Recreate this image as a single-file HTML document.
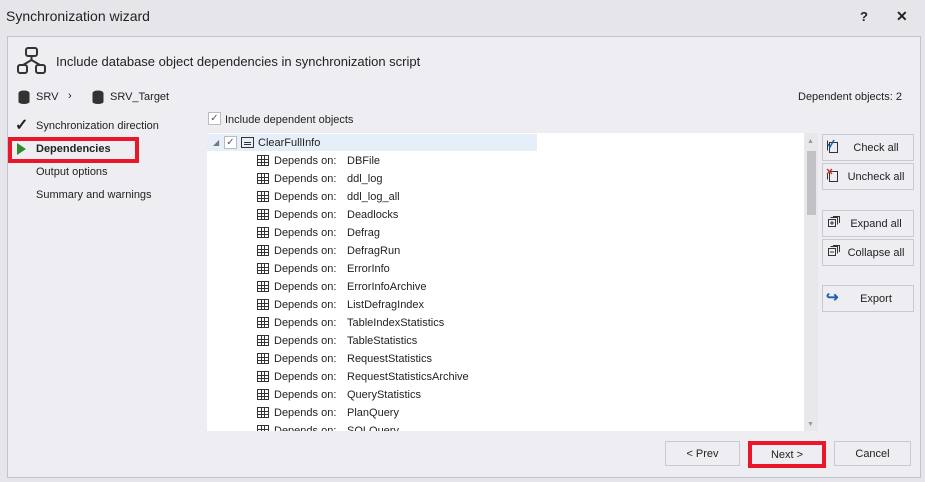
<!DOCTYPE html><html><head><style>
*{margin:0;padding:0;box-sizing:border-box}
body{width:925px;height:482px;background:#e6e6ea;font-family:"Liberation Sans",sans-serif;font-size:11px;color:#222;position:relative;overflow:hidden}
.a{position:absolute}
.panel{left:7px;top:36px;width:914px;height:442px;background:#eeeef2;border:1px solid #bfc3d4}
.btn{position:absolute;background:#eeeef2;border:1px solid #c9c9d0;font-size:11px;text-align:center}
.row{position:absolute;left:50px;height:18px;line-height:18px;white-space:nowrap}
.ti{display:inline-block;width:12px;height:11px;border:1px solid #333;vertical-align:-2px;margin-right:5px;background:linear-gradient(#333,#333) 0 3px/100% 1px no-repeat,linear-gradient(#333,#333) 0 6px/100% 1px no-repeat,linear-gradient(90deg,#333,#333) 3px 0/1px 100% no-repeat,linear-gradient(90deg,#333,#333) 6px 0/1px 100% no-repeat;background-color:#fff}
</style></head><body>
<div class="a" style="left:6px;top:8px;font-size:14px;color:#222">Synchronization wizard</div>
<div class="a" style="left:860px;top:9px;font-size:13px;font-weight:bold">?</div>
<div class="a" style="left:896px;top:8px;font-size:14px;font-weight:bold">✕</div>
<div class="a panel"></div>
<svg class="a" style="left:17px;top:47px" width="30" height="28" viewBox="0 0 30 28" fill="none" stroke="#333" stroke-width="2"><rect x="9" y="1" width="11" height="8" rx="2"/><rect x="1" y="18" width="9" height="8" rx="2"/><rect x="19" y="18" width="9" height="8" rx="2"/><path d="M14.5 9v4M14.5 13L6 18M14.5 13L23 18"/></svg>
<div class="a" style="left:56px;top:54px;font-size:13px">Include database object dependencies in synchronization script</div>
<svg class="a" style="left:18px;top:90px" width="12" height="14"><ellipse cx="6" cy="3" rx="5.5" ry="2.5" fill="#333"/><rect x=".5" y="3" width="11" height="9" fill="#333"/><ellipse cx="6" cy="12" rx="5.5" ry="2" fill="#333"/></svg>
<div class="a" style="left:36px;top:91px">SRV</div>
<div class="a" style="left:68px;top:90px">›</div>
<svg class="a" style="left:92px;top:90px" width="12" height="14"><ellipse cx="6" cy="3" rx="5.5" ry="2.5" fill="#333"/><rect x=".5" y="3" width="11" height="9" fill="#333"/><ellipse cx="6" cy="12" rx="5.5" ry="2" fill="#333"/></svg>
<div class="a" style="left:110px;top:91px">SRV_Target</div>
<div class="a" style="left:798px;top:91px">Dependent objects: 2</div>
<div class="a" style="left:15px;top:115px;font-size:16px;font-weight:bold">✓</div>
<div class="a" style="left:36px;top:120px">Synchronization direction</div>
<div class="a" style="left:8px;top:137px;width:131px;height:26px;border:4px solid #e8182a"></div>
<svg class="a" style="left:17px;top:143px" width="9" height="12"><path d="M0 0L9 6L0 12Z" fill="#2e8b2e"/></svg>
<div class="a" style="left:36px;top:143px;font-weight:bold">Dependencies</div>
<div class="a" style="left:36px;top:166px">Output options</div>
<div class="a" style="left:36px;top:189px">Summary and warnings</div>
<div class="a" style="left:208px;top:112px;width:13px;height:13px;border:1px solid #bbb;background:#fff;font-size:10px;line-height:11px;text-align:center;color:#555">✓</div>
<div class="a" style="left:225px;top:114px">Include dependent objects</div>
<div class="a" style="left:207px;top:133px;width:597px;height:298px;background:#fff;overflow:hidden">
 <div class="a" style="left:0;top:1px;width:330px;height:17px;background:#e5eef9"></div>
 <div class="a" style="left:6px;top:5px;font-size:8px;color:#777">◢</div>
 <div class="a" style="left:17px;top:3px;width:13px;height:13px;border:1px solid #bbb;background:#fff;font-size:10px;line-height:11px;text-align:center;color:#555">✓</div>
 <div class="a" style="left:34px;top:4px;width:13px;height:11px;border:1px solid #333;background:linear-gradient(#333,#333) 2px 4px/7px 1px no-repeat,linear-gradient(#333,#333) 2px 6px/7px 1px no-repeat"></div>
 <div class="row" style="left:51px;top:1px">ClearFullInfo</div>
 <div class="row" style="top:19px"><span class="ti"></span>Depends on:<span class="a" style="left:90px">DBFile</span></div>
 <div class="row" style="top:37px"><span class="ti"></span>Depends on:<span class="a" style="left:90px">ddl_log</span></div>
 <div class="row" style="top:55px"><span class="ti"></span>Depends on:<span class="a" style="left:90px">ddl_log_all</span></div>
 <div class="row" style="top:73px"><span class="ti"></span>Depends on:<span class="a" style="left:90px">Deadlocks</span></div>
 <div class="row" style="top:91px"><span class="ti"></span>Depends on:<span class="a" style="left:90px">Defrag</span></div>
 <div class="row" style="top:109px"><span class="ti"></span>Depends on:<span class="a" style="left:90px">DefragRun</span></div>
 <div class="row" style="top:127px"><span class="ti"></span>Depends on:<span class="a" style="left:90px">ErrorInfo</span></div>
 <div class="row" style="top:145px"><span class="ti"></span>Depends on:<span class="a" style="left:90px">ErrorInfoArchive</span></div>
 <div class="row" style="top:163px"><span class="ti"></span>Depends on:<span class="a" style="left:90px">ListDefragIndex</span></div>
 <div class="row" style="top:181px"><span class="ti"></span>Depends on:<span class="a" style="left:90px">TableIndexStatistics</span></div>
 <div class="row" style="top:199px"><span class="ti"></span>Depends on:<span class="a" style="left:90px">TableStatistics</span></div>
 <div class="row" style="top:217px"><span class="ti"></span>Depends on:<span class="a" style="left:90px">RequestStatistics</span></div>
 <div class="row" style="top:235px"><span class="ti"></span>Depends on:<span class="a" style="left:90px">RequestStatisticsArchive</span></div>
 <div class="row" style="top:253px"><span class="ti"></span>Depends on:<span class="a" style="left:90px">QueryStatistics</span></div>
 <div class="row" style="top:271px"><span class="ti"></span>Depends on:<span class="a" style="left:90px">PlanQuery</span></div>
 <div class="row" style="top:289px"><span class="ti"></span>Depends on:<span class="a" style="left:90px">SQLQuery</span></div>
</div>
<div class="a" style="left:804px;top:133px;width:14px;height:298px;background:#e8e8ea"></div>
<div class="a" style="left:807px;top:151px;width:9px;height:64px;background:#c2c2c6"></div>
<div class="a" style="left:807px;top:138px;font-size:7px;color:#999">▲</div>
<div class="a" style="left:807px;top:421px;font-size:7px;color:#999">▼</div>
<div class="btn" style="left:822px;top:134px;width:92px;height:27px;line-height:26px;padding-left:16px">Check all</div>
<svg class="a" style="left:826px;top:139px" width="14" height="14" fill="none" stroke="#333"><path d="M3.5 3.5h8v10h-8zM1.5 1.5v10"/><path d="M2 5l2 3 4-7" stroke="#1a5fb0" stroke-width="1.5"/></svg>
<div class="btn" style="left:822px;top:163px;width:92px;height:27px;line-height:26px;padding-left:16px">Uncheck all</div>
<svg class="a" style="left:826px;top:168px" width="14" height="14" fill="none" stroke="#333"><path d="M3.5 3.5h8v10h-8zM1.5 5.5v6"/><path d="M1 1l5 5M6 1L1 6" stroke="#c0392b" stroke-width="1.3"/></svg>
<div class="btn" style="left:822px;top:210px;width:92px;height:27px;line-height:26px;padding-left:16px">Expand all</div>
<svg class="a" style="left:828px;top:216px" width="12" height="12" fill="none" stroke="#333"><path d="M.5 3.5h7v7h-7zM2.5 1.5h7v7M4.5 -.5"/><path d="M5 .5h6.5v6.5"/><path d="M2 7h4M4 5v4"/></svg>
<div class="btn" style="left:822px;top:239px;width:92px;height:27px;line-height:26px;padding-left:16px">Collapse all</div>
<svg class="a" style="left:828px;top:245px" width="12" height="12" fill="none" stroke="#333"><path d="M.5 3.5h7v7h-7zM2.5 1.5h7v7"/><path d="M5 .5h6.5v6.5"/><path d="M2 7h4"/></svg>
<div class="btn" style="left:822px;top:285px;width:92px;height:27px;line-height:26px;padding-left:16px">Export</div>
<div class="a" style="left:826px;top:288px;color:#1a5fb0;font-size:15px;font-weight:bold">↪</div>
<div class="btn" style="left:665px;top:441px;width:75px;height:25px;line-height:24px">&lt; Prev</div>
<div class="btn" style="left:748px;top:441px;width:78px;height:27px;line-height:20px;border:4px solid #e8182a">Next &gt;</div>
<div class="btn" style="left:834px;top:441px;width:77px;height:25px;line-height:24px">Cancel</div>
</body></html>
